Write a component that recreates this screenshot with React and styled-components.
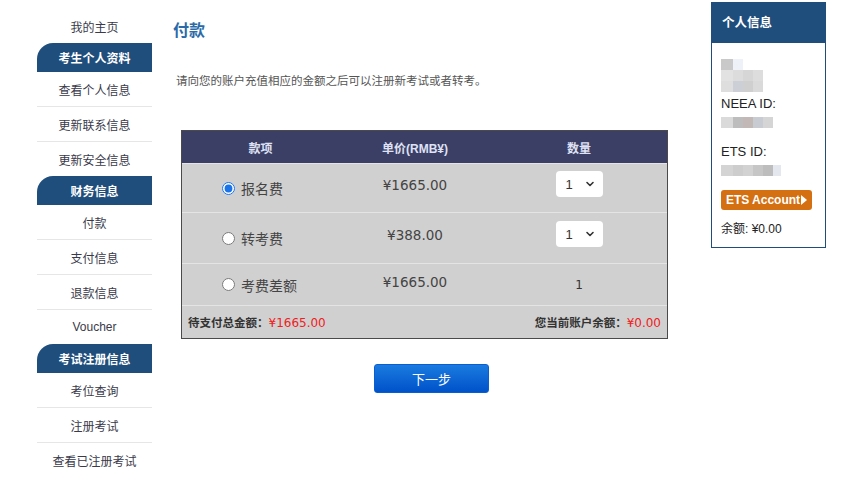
import React from "react";
import styled, { createGlobalStyle } from "styled-components";

const GlobalStyle = createGlobalStyle`
  body {
    margin: 0;
    background: #fff;
    font-family: "Liberation Sans", "Noto Sans CJK SC", sans-serif;
    color: #333;
  }
`;

const menu = [
  { type: "item", label: "我的主页" },
  { type: "head", label: "考生个人资料" },
  { type: "group", items: ["查看个人信息", "更新联系信息", "更新安全信息"] },
  { type: "head", label: "财务信息" },
  { type: "group", items: ["付款", "支付信息", "退款信息", "Voucher"] },
  { type: "head", label: "考试注册信息" },
  { type: "group", items: ["考位查询", "注册考试", "查看已注册考试"] }
];

const rows = [
  { name: "报名费", price: "¥1665.00", select: true, checked: true, h: 48 },
  { name: "转考费", price: "¥388.00", select: true, h: 50 },
  { name: "考费差额", price: "¥1665.00", select: false, h: 41 }
];

const Chevron = () => (
  <svg width="10" height="10" viewBox="0 0 10 10">
    <path d="M2 3.5 L5 6.5 L8 3.5" fill="none" stroke="#333" strokeWidth="1.6" strokeLinecap="round" strokeLinejoin="round" />
  </svg>
);

const App = () => {
  return (
    <Page>
      <GlobalStyle />
      <Sidebar>
        {menu.map((m, i) => {
          if (m.type === "item") return <NavItem key={i}>{m.label}</NavItem>;
          if (m.type === "head") return <NavHead key={i}>{m.label}</NavHead>;
          return (
            <NavGroup key={i}>
              {m.items.map(it => (
                <NavItem key={it}>{it}</NavItem>
              ))}
            </NavGroup>
          );
        })}
      </Sidebar>

      <Main>
        <Title>付款</Title>
        <Intro>请向您的账户充值相应的金额之后可以注册新考试或者转考。</Intro>
        <Table>
          <HeadRow>
            <Cell col={1}>款项</Cell>
            <Cell col={2}>单价(RMB¥)</Cell>
            <Cell col={3}>数量</Cell>
          </HeadRow>
          {rows.map(r => (
            <Row key={r.name} h={r.h}>
              <NameCell>
                <Radio type="radio" name="fee" defaultChecked={r.checked} />
                <span>{r.name}</span>
              </NameCell>
              <Price>{r.price}</Price>
              <Cell col={3}>
                {r.select ? (
                  <SelectBox>
                    <span>1</span>
                    <Chevron />
                  </SelectBox>
                ) : (
                  <Qty>1</Qty>
                )}
              </Cell>
            </Row>
          ))}
          <FootRow>
            <span>
              待支付总金额：<Red>¥1665.00</Red>
            </span>
            <span>
              您当前账户余额：<Red>¥0.00</Red>
            </span>
          </FootRow>
        </Table>
        <ButtonWrap>
          <NextButton>下一步</NextButton>
        </ButtonWrap>
      </Main>

      <InfoPanel>
        <InfoHead>个人信息</InfoHead>
        <InfoBody>
          <Blur>
            <Pix w={12} c="#c9c9c9" />
            <Pix w={10} c="#eef2f8" />
          </Blur>
          <Blur>
            <Pix w={12} c="#e2e2e2" />
            <Pix w={10} c="#dcdcdc" />
            <Pix w={10} c="#d6d6d6" />
            <Pix w={10} c="#dddddd" />
          </Blur>
          <Blur>
            <Pix w={12} c="#dedede" />
            <Pix w={10} c="#ccd0d6" />
            <Pix w={10} c="#cfcfcf" />
            <Pix w={10} c="#dadada" />
          </Blur>
          <Label top={4}>NEEA ID:</Label>
          <Blur top={5}>
            <Pix w={12} c="#dadada" />
            <Pix w={10} c="#bdbdbd" />
            <Pix w={10} c="#c2b8b6" />
            <Pix w={10} c="#c8ccd2" />
            <Pix w={10} c="#d5d5d5" />
          </Blur>
          <Label top={16}>ETS ID:</Label>
          <Blur top={5}>
            <Pix w={12} c="#d4d4d4" />
            <Pix w={10} c="#cdcdcd" />
            <Pix w={10} c="#d2d2d2" />
            <Pix w={10} c="#c6c6c6" />
            <Pix w={10} c="#bdbdbd" />
            <Pix w={8} c="#e4e8ee" />
          </Blur>
          <EtsButton>
            ETS Account
            <Tri />
          </EtsButton>
          <Balance>余额: ¥0.00</Balance>
        </InfoBody>
      </InfoPanel>
    </Page>
  );
};

const Page = styled.div`
  display: flex;
  align-items: flex-start;
  width: 865px;
  height: 479px;
  padding-left: 37px;
  box-sizing: border-box;
`;

const Sidebar = styled.div`
  width: 115px;
  padding-top: 9px;
  display: flex;
  flex-direction: column;
`;

const NavGroup = styled.div`
  display: flex;
  flex-direction: column;
`;

const NavItem = styled.div`
  height: 34px;
  display: flex;
  align-items: center;
  justify-content: center;
  font-size: 12px;
  color: #3a3a4a;

  & + & {
    border-top: 1px solid #e6e6e6;
  }
`;

const NavHead = styled.div`
  height: 29px;
  background: #1f4e7c;
  border-top-left-radius: 16px;
  display: flex;
  align-items: center;
  justify-content: center;
  color: #fff;
  font-weight: bold;
  font-size: 12px;
`;

const Main = styled.div`
  flex: 1;
  margin-left: 21px;
  padding-top: 18px;
`;

const Title = styled.h1`
  margin: 0;
  font-size: 16px;
  font-weight: bold;
  color: #2a6aa8;
  font-family: "Noto Sans CJK SC", sans-serif;
  line-height: 22px;
`;

const Intro = styled.p`
  margin: 32px 0 0 3px;
  font-size: 11.5px;
  color: #555;
  line-height: 18px;
`;

const Table = styled.div`
  margin: 40px 0 0 8px;
  width: 487px;
  border: 1px solid #4a4a4a;
  background: #d0d0d0;
  box-sizing: border-box;
`;

const HeadRow = styled.div`
  display: flex;
  height: 32px;
  background: #3b3f66;
  color: #dfe2f4;
  font-weight: bold;
  font-size: 12px;
  align-items: center;
`;

const Row = styled.div`
  display: flex;
  align-items: center;
  height: ${p => p.h}px;
  border-top: 1px solid #e4e4e4;
  font-size: 13px;
  color: #444;
`;

const Cell = styled.div`
  width: ${p => (p.col === 1 ? 157 : p.col === 2 ? 152 : 176)}px;
  text-align: center;
  display: flex;
  justify-content: center;
  align-items: center;
`;

const NameCell = styled.div`
  width: 157px;
  display: flex;
  align-items: center;
  padding-left: 40px;
  box-sizing: border-box;
  gap: 6px;
  font-size: 14px;
  color: #444;
  font-family: "Noto Sans CJK SC", sans-serif;
`;

const Radio = styled.input`
  margin: 0;
  width: 13px;
  height: 13px;
  accent-color: #1a73e8;
`;

const Price = styled.div`
  width: 152px;
  text-align: center;
  font-family: "DejaVu Sans", sans-serif;
  font-size: 13.5px;
  color: #444;
  margin-top: -6px;
`;

const SelectBox = styled.div`
  width: 47px;
  height: 26px;
  background: #fff;
  border-radius: 4px;
  display: flex;
  align-items: center;
  justify-content: space-between;
  padding: 0 8px 0 10px;
  box-sizing: border-box;
  font-size: 13px;
  color: #333;
  margin-top: -8px;
`;

const Qty = styled.span`
  font-size: 12px;
  color: #333;
  font-family: "DejaVu Sans", sans-serif;
`;

const FootRow = styled.div`
  display: flex;
  justify-content: space-between;
  align-items: center;
  height: 32px;
  border-top: 1px solid #e4e4e4;
  padding: 0 6px;
  font-size: 11.5px;
  font-weight: bold;
  color: #333;
`;

const Red = styled.span`
  color: #f02020;
  font-weight: normal;
  font-family: "DejaVu Sans", sans-serif;
  font-size: 12px;
`;

const ButtonWrap = styled.div`
  width: 487px;
  margin-left: 8px;
  display: flex;
  justify-content: center;
  padding-left: 14px;
  box-sizing: border-box;
  margin-top: 25px;
`;

const NextButton = styled.button`
  width: 115px;
  height: 29px;
  border: 1px solid #0a5fd0;
  border-radius: 3px;
  background: linear-gradient(#1a7be0, #0052c9);
  color: #fff;
  font-size: 13px;
  font-family: "Noto Sans CJK SC", sans-serif;
`;

const InfoPanel = styled.div`
  width: 115px;
  margin: 2px 39px 0 0;
  border: 1px solid #1f4e7c;
  box-sizing: border-box;
  height: 246px;
`;

const InfoHead = styled.div`
  height: 40px;
  background: #1f4e7c;
  color: #fff;
  font-weight: bold;
  font-size: 12.5px;
  display: flex;
  align-items: center;
  padding: 0 0 3px 10px;
  box-sizing: border-box;
`;

const InfoBody = styled.div`
  padding: 16px 0 0 9px;
  display: flex;
  flex-direction: column;
  align-items: flex-start;
`;

const Blur = styled.div`
  display: flex;
  height: 11px;
  margin-top: ${p => p.top || 0}px;
  filter: blur(0.6px);
`;

const Pix = styled.div`
  width: ${p => p.w}px;
  height: 100%;
  background: ${p => p.c};
`;

const Label = styled.div`
  margin-top: ${p => p.top}px;
  font-size: 13px;
  color: #222;
  line-height: 16px;
`;

const EtsButton = styled.div`
  margin-top: 14px;
  width: 91px;
  height: 20px;
  background: #d46f12;
  border-radius: 3px;
  color: #fff;
  font-weight: bold;
  font-size: 12px;
  display: flex;
  align-items: center;
  justify-content: center;
  gap: 1px;
`;

const Tri = styled.span`
  width: 0;
  height: 0;
  border-left: 6px solid #fff;
  border-top: 5px solid transparent;
  border-bottom: 5px solid transparent;
`;

const Balance = styled.div`
  margin-top: 11px;
  font-size: 12px;
  color: #222;
  line-height: 16px;
`;

export default App;
